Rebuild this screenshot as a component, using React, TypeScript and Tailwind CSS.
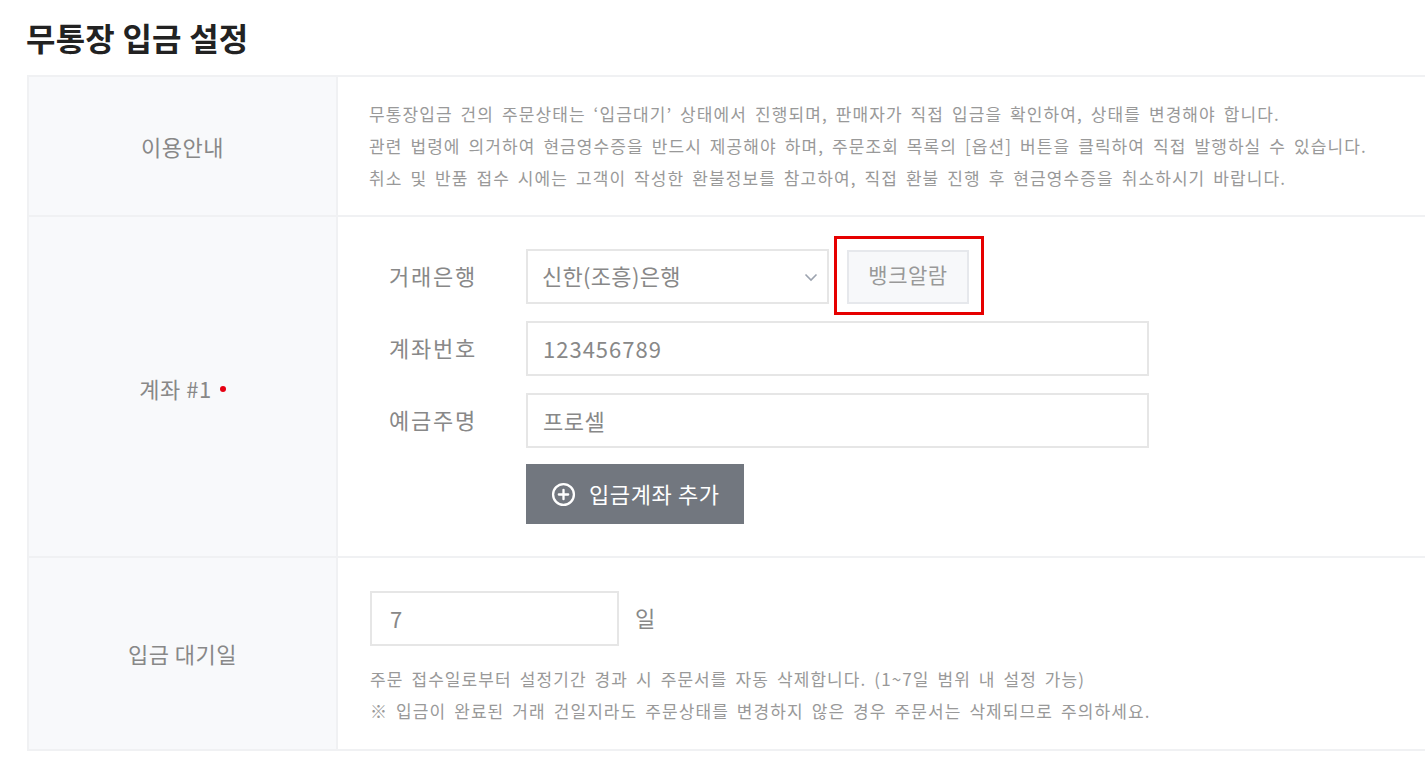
import React from "react";

const font = { fontFamily: '"Noto Sans CJK KR", "Noto Sans", sans-serif' };

function PlusCircle() {
  return (
    <svg width="25" height="25" viewBox="0 0 24 24" fill="none" stroke="white" strokeWidth="2.2" strokeLinecap="round">
      <circle cx="12" cy="12" r="10" />
      <path d="M12 7.5v9M7.5 12h9" />
    </svg>
  );
}

function Chevron() {
  return (
    <svg width="16" height="10" viewBox="0 0 16 10" fill="none" stroke="#9ca3af" strokeWidth="1.6">
      <path d="M2.5 2.5l5.5 5.5 5.5-5.5" />
    </svg>
  );
}

export default function App() {
  return (
    <div className="w-[1425px] h-[766px] overflow-hidden bg-white" style={font}>
      <h1 className="pl-[26px] pt-[15px] text-[32px] font-bold leading-[44px] text-[#222] tracking-[0.2px]">무통장 입금 설정</h1>
      <div className="ml-[27px] mt-[16px] w-[1420px] border-2 border-r-0 border-[#f0f1f3]">
        {/* Row 1 */}
        <div className="flex h-[140px] border-b-2 border-[#f0f1f3]">
          <div className="w-[309px] shrink-0 bg-[#f8f9fb] border-r-2 border-[#f0f1f3] flex items-center justify-center text-[22px] text-[#888] tracking-[0.5px]">이용안내</div>
          <div className="flex items-center pl-[31px] text-[17px] leading-[32px] text-[#999] tracking-[1.1px] [word-spacing:3px]">
            <div>
              <p>무통장입금 건의 주문상태는 ‘입금대기’ 상태에서 진행되며, 판매자가 직접 입금을 확인하여, 상태를 변경해야 합니다.</p>
              <p>관련 법령에 의거하여 현금영수증을 반드시 제공해야 하며, 주문조회 목록의 [옵션] 버튼을 클릭하여 직접 발행하실 수 있습니다.</p>
              <p>취소 및 반품 접수 시에는 고객이 작성한 환불정보를 참고하여, 직접 환불 진행 후 현금영수증을 취소하시기 바랍니다.</p>
            </div>
          </div>
        </div>
        {/* Row 2 */}
        <div className="flex h-[341px] border-b-2 border-[#f0f1f3]">
          <div className="w-[309px] shrink-0 bg-[#f8f9fb] border-r-2 border-[#f0f1f3] flex items-center justify-center text-[22px] text-[#888] tracking-[0.5px] pt-[4px]">
            계좌 #1<span className="ml-[8px] inline-block w-[6px] h-[6px] rounded-full bg-[#e60012]" />
          </div>
          <div className="pl-[51px] pt-[32px] flex flex-col">
            <div className="flex items-center h-[55px]">
              <span className="w-[137px] text-[22px] text-[#888] tracking-[1.8px] pb-[2px]">거래은행</span>
              <div className="w-[303px] h-[55px] border-2 border-[#e6e6e6] flex items-center justify-between pl-[14px] pr-[8px] text-[22px] text-[#888] tracking-[0.3px]">
                <span className="pb-[2px]">신한(조흥)은행</span>
                <Chevron />
              </div>
              <div className="relative ml-[18px]">
                <div className="w-[122px] h-[54px] border-2 border-[#e6e8ec] bg-[#f7f8fa] flex items-center justify-center text-[21px] text-[#999] tracking-[0.5px] pb-[4px]">뱅크알람</div>
                <div className="absolute top-[-14px] left-[-13px] right-[-15px] bottom-[-11px] border-[3px] border-[#e60000]" />
              </div>
            </div>
            <div className="flex items-center h-[55px] mt-[17px]">
              <span className="w-[137px] text-[22px] text-[#888] tracking-[1.8px] pb-[2px]">계좌번호</span>
              <div className="w-[623px] h-[55px] border-2 border-[#e6e6e6] flex items-center pl-[15px] text-[22px] text-[#888] tracking-[1px]">123456789</div>
            </div>
            <div className="flex items-center h-[55px] mt-[17px]">
              <span className="w-[137px] text-[22px] text-[#888] tracking-[1.8px] pb-[2px]">예금주명</span>
              <div className="w-[623px] h-[55px] border-2 border-[#e6e6e6] flex items-center pl-[15px] text-[22px] text-[#888] tracking-[0.5px]">프로셀</div>
            </div>
            <div className="flex mt-[16px]">
              <div className="ml-[137px] w-[218px] h-[60px] bg-[#72777f] flex items-center pl-[25px] gap-[13px] text-white text-[22px] tracking-[0.6px]">
                <PlusCircle />
                <span className="pb-[2px]">입금계좌 추가</span>
              </div>
            </div>
          </div>
        </div>
        {/* Row 3 */}
        <div className="flex h-[191px]">
          <div className="w-[309px] shrink-0 bg-[#f8f9fb] border-r-2 border-[#f0f1f3] flex items-center justify-center text-[22px] text-[#888] tracking-[0.5px]">입금 대기일</div>
          <div className="pl-[32px] pt-[33px]">
            <div className="flex items-center">
              <div className="w-[249px] h-[55px] border-2 border-[#e6e6e6] flex items-center pl-[18px] text-[22px] text-[#888]">7</div>
              <span className="ml-[16px] text-[22px] text-[#888] pb-[2px]">일</span>
            </div>
            <div className="mt-[17px] text-[17px] leading-[32px] text-[#999] tracking-[1.1px] [word-spacing:3px]">
              <p>주문 접수일로부터 설정기간 경과 시 주문서를 자동 삭제합니다. (1~7일 범위 내 설정 가능)</p>
              <p>※ 입금이 완료된 거래 건일지라도 주문상태를 변경하지 않은 경우 주문서는 삭제되므로 주의하세요.</p>
            </div>
          </div>
        </div>
      </div>
    </div>
  );
}
